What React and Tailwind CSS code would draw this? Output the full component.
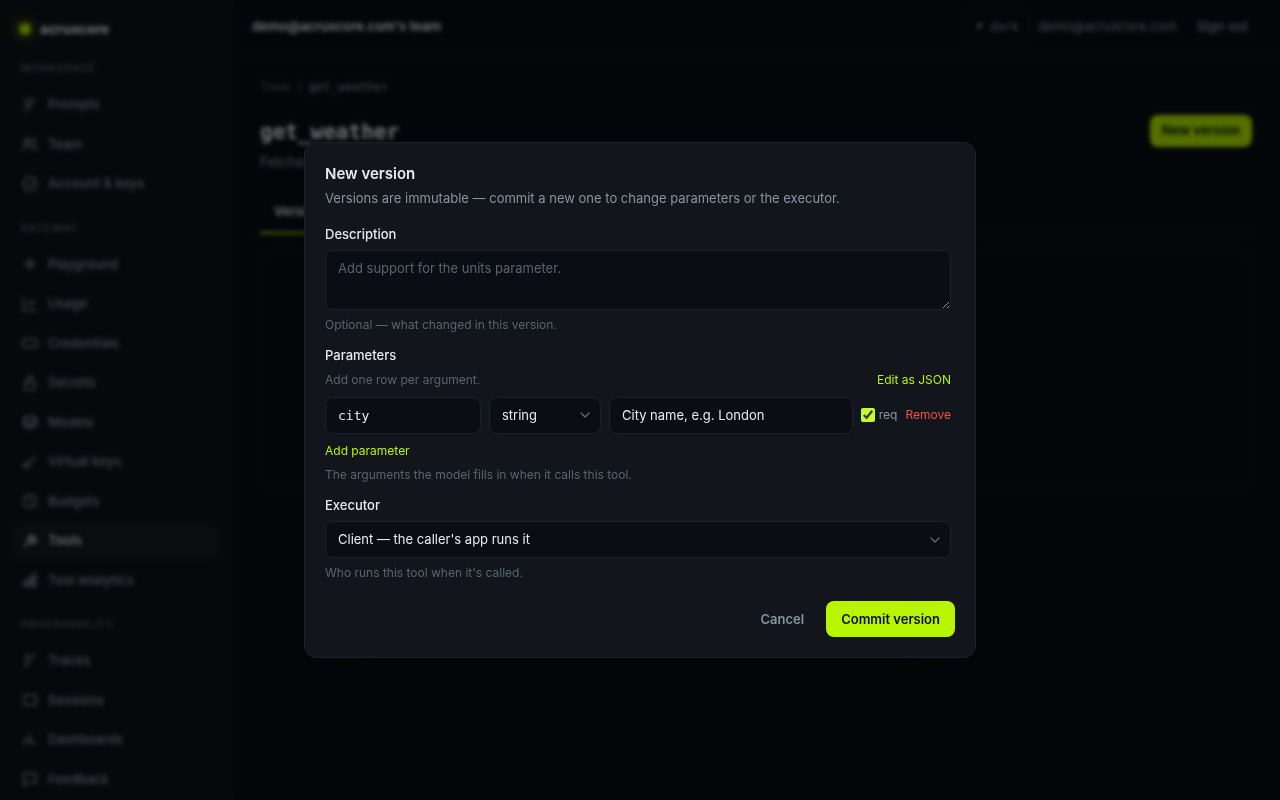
import React from 'react';

const navGroups = [
    {
        title: 'Workspace',
        items: [
            { label: 'Prompts', icon: <path d="M2.500 3h11M2.500 6.500h9M2.500 10h7M2.500 13h4" /> },
            { label: 'Team', icon: <><circle cx="5.5" cy="5" r="2.5" /><path d="M1 14c0-3 2-4.500 4.500-4.500S10 11 10 14M10.500 2.500a2.500 2.500 0 0 1 0 5M12 10c2 .5 3 2 3 4" /></> },
            { label: 'Account & keys', icon: <><circle cx="8" cy="8" r="6.5" /><path d="M5.500 8l2 2 4-4" /></> },
        ],
    },
    {
        title: 'Gateway',
        items: [
            { label: 'Playground', icon: <><circle cx="8" cy="8" r="3.5" /><path d="M8 2v12M2 8h12M4 4l8 8M12 4l-8 8" opacity="0.3" /></> },
            { label: 'Usage', icon: <path d="M1.500 1.500v13h13M4.500 9.500l3-3 2 2 4-5" /> },
            { label: 'Credentials', icon: <rect x="1" y="4" width="14" height="8" rx="1.5" /> },
            { label: 'Secrets', icon: <><rect x="3" y="7" width="10" height="7.5" rx="1.5" /><path d="M5 7V4.500a3 3 0 0 1 6 0V7" /></> },
            { label: 'Models', icon: <><path d="M8 1.500l6.500 3v7L8 14.500l-6.500-3v-7z" /><path d="M1.500 4.500L8 8l6.500-3.500M1.500 8.500L8 12l6.500-3.500" /></> },
            { label: 'Virtual keys', icon: <><circle cx="4.500" cy="11.500" r="2.500" /><path d="M6.500 9.500L13 3M10.500 3.500l2.500 2.500" /></> },
            { label: 'Budgets', icon: <><circle cx="8" cy="8" r="6.500" /><path d="M8 4v4l2.500 1.500" /></> },
            { label: 'Tools', active: true, icon: <path d="M2 14l5-5M6 6a3.500 3.500 0 0 1 5-3L9 5l2 2 2.500-2A3.500 3.500 0 0 1 9 10L6 7z" /> },
            { label: 'Tool analytics', icon: <path d="M2.500 9h2v5h-2zM7 6h2v8H7zM11.500 2h2v12h-2z" /> },
        ],
    },
    {
        title: 'Observability',
        items: [
            { label: 'Traces', icon: <path d="M2.500 3h11M2.500 6.500h7M2.500 10h6M2.500 13h3" /> },
            { label: 'Sessions', icon: <rect x="2" y="3" width="12" height="10" rx="1.500" /> },
            { label: 'Dashboards', icon: <path d="M2.500 13V7M5.500 10V5M8.500 13V2.500M12 13V9" /> },
            { label: 'Feedback', icon: <path d="M2 2.500h12v9H6L2 14.500z" /> },
        ],
    },
];

const inputClass = 'rounded-lg border border-[#1d2129] bg-[#0a0d14] px-3 text-[13px] leading-normal text-[#e8eaed] outline-none';

const Chevron = () => (
    <svg viewBox="0 0 16 16" className="pointer-events-none absolute right-2 top-1/2 size-4 -translate-y-1/2" fill="none" stroke="#666d79" strokeWidth="1.2" strokeLinecap="round" strokeLinejoin="round">
        <path d="M4 6l4 4 4-4" />
    </svg>
);

const Sidebar = () => (
    <aside className="w-[232px] shrink-0 overflow-hidden border-r border-[#1b1f27] bg-[#10131a] px-3 pt-[19px]">
        <div className="flex items-center gap-2.5 px-2 pb-[3px]">
            <span className="size-2.5 rounded-xs bg-[#b8f500] shadow-[0_0_12px_#b8f500]"></span>
            <span className="text-sm font-bold text-[#e8eaed]">acruxcore</span>
        </div>
        {navGroups.map((group) => (
            <nav key={group.title} aria-label={group.title} className="mt-[18px]">
                <h2 className="px-2 pb-[11px] text-[11px] leading-4 font-medium tracking-[0.06em] text-[#5b6270] uppercase">{group.title}</h2>
                <div className="flex flex-col gap-1">
                    {group.items.map((item) => (
                        <a
                            key={item.label}
                            href="#"
                            className={`flex items-center gap-2.5 rounded-lg px-2.5 py-2 text-[13px] leading-normal font-medium ${item.active ? 'bg-[#151d22] text-[#e8eaed]' : 'text-[#8b93a1]'}`}
                        >
                            <svg viewBox="0 0 16 16" className="size-4" fill="none" stroke="currentColor" strokeWidth="1.5">{item.icon}</svg>
                            {item.label}
                        </a>
                    ))}
                </div>
            </nav>
        ))}
    </aside>
);

const Page = () => (
    <div className="flex min-w-0 flex-1 flex-col">
        <header className="flex h-[54px] shrink-0 items-center justify-between border-b border-[#14181f] px-5">
            <span className="text-[13px] font-semibold text-[#e8eaed]">demo@acruxcore.com's team</span>
            <div className="flex items-center gap-2 text-[13px] text-[#8b93a1]">
                <button className="flex h-8 items-center gap-2 rounded-lg border border-[#1d2129] px-2.5 font-['DejaVu_Sans_Mono',monospace] text-xs">
                    <span className="text-[8px]">●</span>
                    dark
                </button>
                <span>demo@acruxcore.com</span>
                <button className="px-3 font-medium">Sign out</button>
            </div>
        </header>
        <main className="px-7 pt-[23px]">
            <div className="flex gap-[7px] text-xs leading-5 text-[#5b6270]">
                <a href="#">Tools</a>
                <span>/</span>
                <span className="font-['DejaVu_Sans_Mono',monospace] text-[#8b93a1]">get_weather</span>
            </div>
            <div className="mt-[18px] flex items-start justify-between">
                <div>
                    <h1 className="font-['DejaVu_Sans_Mono',monospace] text-[21px] leading-[35px] font-bold text-[#e8eaed]">get_weather</h1>
                    <p className="mt-0.5 text-sm text-[#8b93a1]">Fetches</p>
                </div>
                <button className="h-8 rounded-lg bg-[#b8f500] px-3 text-[13px] font-semibold text-[#0a0d14]">New version</button>
            </div>
            <div className="mt-5 flex border-b border-[#1d2129]">
                <button className="-mb-px border-b-2 border-[#b8f500] px-3.5 py-2.5 text-[13px] font-semibold text-[#e8eaed]">Versions</button>
            </div>
            <div className="mt-4 h-[238px] rounded-xl border border-[#14181f]"></div>
        </main>
    </div>
);

const Dialog = () => (
    <div role="dialog" aria-modal="true" aria-labelledby="dialog-title" className="w-full max-w-2xl rounded-xl border border-[#1d2129] bg-[#12151c] p-5 shadow-2xl">
        <h2 id="dialog-title" className="text-[15px] leading-normal font-semibold text-[#e8eaed]">New version</h2>
        <p className="mt-1 text-[13px] leading-normal text-[#8b93a1]">Versions are immutable — commit a new one to change parameters or the executor.</p>

        <form className="mt-4 flex flex-col gap-3 pr-1">
            <div className="flex flex-col gap-1.5">
                <label htmlFor="description" className="text-[13px] leading-normal font-medium text-[#e8eaed]">Description</label>
                <textarea id="description" rows="2" placeholder="Add support for the units parameter." className={`${inputClass} block h-[60px] resize-y py-2 placeholder:text-[#5b6270]`}></textarea>
                <p className="text-xs leading-normal text-[#5b6270]">Optional — what changed in this version.</p>
            </div>

            <div className="flex flex-col">
                <h3 className="mb-[5px] text-[13px] leading-normal font-medium text-[#e8eaed]">Parameters</h3>
                <div className="flex flex-col gap-2 text-xs leading-normal">
                    <div className="flex justify-between">
                        <span className="text-[#5b6270]">Add one row per argument.</span>
                        <button type="button" className="text-[#b8f500]">Edit as JSON</button>
                    </div>
                    <div className="flex items-center gap-2">
                        <input aria-label="Parameter name" defaultValue="city" className={`${inputClass} h-[37px] w-[156px] font-['DejaVu_Sans_Mono',monospace]`} />
                        <div className="relative w-28">
                            <select aria-label="Parameter type" className={`${inputClass} h-[37px] w-full appearance-none`}>
                                <option>string</option>
                            </select>
                            <Chevron />
                        </div>
                        <input aria-label="Parameter description" defaultValue="City name, e.g. London" className={`${inputClass} h-[37px] min-w-0 flex-1`} />
                        <label className="flex items-center gap-1 text-[#8b93a1]">
                            <input type="checkbox" defaultChecked className="size-3.5 accent-[#c6fc2c]" />
                            req
                        </label>
                        <button type="button" className="text-[#f0524a]">Remove</button>
                    </div>
                    <button type="button" className="self-start text-[#b8f500]">Add parameter</button>
                </div>
                <p className="mt-1.5 text-xs leading-normal text-[#5b6270]">The arguments the model fills in when it calls this tool.</p>
            </div>

            <div className="flex flex-col gap-1.5">
                <label htmlFor="executor" className="text-[13px] leading-normal font-medium text-[#e8eaed]">Executor</label>
                <div className="relative">
                    <select id="executor" className={`${inputClass} block h-[37px] w-full appearance-none`}>
                        <option>Client — the caller's app runs it</option>
                    </select>
                    <Chevron />
                </div>
                <p className="text-xs leading-normal text-[#5b6270]">Who runs this tool when it's called.</p>
            </div>
        </form>

        <div className="mt-[19px] flex justify-end gap-2 text-[13px] font-semibold">
            <button className="h-9 px-3.5 text-[#8b93a1]">Cancel</button>
            <button className="h-9 rounded-lg bg-[#b8f500] px-[15px] text-[#0a0d14]">Commit version</button>
        </div>
    </div>
);

const App = () => {
    return (
        <div className="flex h-screen overflow-hidden bg-[#0a0d14] font-[Inter,sans-serif] [color-scheme:dark]">
            <Sidebar />
            <Page />
            <div className="fixed inset-0 flex items-center justify-center bg-black/55 p-4 backdrop-blur-[2px]">
                <Dialog />
            </div>
        </div>
    );
};

export default App;
